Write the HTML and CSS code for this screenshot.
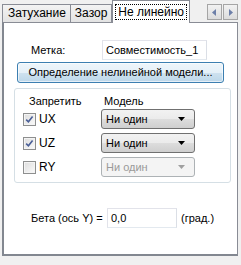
FILE: index.html
```html
<!DOCTYPE html>
<html>
<head>
<meta charset="utf-8">
<link rel="stylesheet" href="styles.css">
</head>
<body>
<div class="tabstrip">
  <div class="tab first">Затухание</div>
  <div class="tab">Зазор</div>
  <div class="tab active"><span class="focus">Не линейно</span></div>
  <div class="scroll">
    <div class="sbtn"><svg width="5" height="7" viewBox="0 0 5 7"><path d="M4 0 L0 3.5 L4 7Z" fill="#6d7fa8"/></svg></div>
    <div class="sbtn"><svg width="5" height="7" viewBox="0 0 5 7"><path d="M1 0 L5 3.5 L1 7Z" fill="#6d7fa8"/></svg></div>
  </div>
</div>
<div class="panel">
  <div class="row-label">
    <span class="lbl">Метка:</span>
    <div class="edit">Совместимость_1</div>
  </div>
  <div class="button">Определение нелинейной модели...</div>
  <div class="group">
    <div class="ghead"><span class="gh1">Запретить</span><span class="gh2">Модель</span></div>
    <div class="grow">
      <div class="chk"><span class="box"><svg width="11" height="11" viewBox="0 0 11 11"><path d="M2.2 5.6 L4.4 7.8 L8.6 2.4" fill="none" stroke="#4a5f97" stroke-width="1.6"/></svg></span><span>UX</span></div>
      <div class="combo"><span>Ни один</span><svg width="7" height="4" viewBox="0 0 7 4"><path d="M0 0 H7 L3.5 4Z" fill="#000"/></svg></div>
    </div>
    <div class="grow">
      <div class="chk"><span class="box"><svg width="11" height="11" viewBox="0 0 11 11"><path d="M2.2 5.6 L4.4 7.8 L8.6 2.4" fill="none" stroke="#4a5f97" stroke-width="1.6"/></svg></span><span>UZ</span></div>
      <div class="combo"><span>Ни один</span><svg width="7" height="4" viewBox="0 0 7 4"><path d="M0 0 H7 L3.5 4Z" fill="#000"/></svg></div>
    </div>
    <div class="grow">
      <div class="chk"><span class="box"></span><span>RY</span></div>
      <div class="combo disabled"><span>Ни один</span><svg width="7" height="4" viewBox="0 0 7 4"><path d="M0 0 H7 L3.5 4Z" fill="#a0a0a0"/></svg></div>
    </div>
  </div>
  <div class="row-beta">
    <span class="blbl">Бета (ось Y) =</span>
    <div class="edit beta">0,0</div>
    <span class="unit">(град.)</span>
  </div>
</div>
</body>
</html>
```
FILE: styles.css
```css
html, body {
  margin: 0;
  padding: 0;
  background: #f0f0f0;
  font-family: "Liberation Sans", Arial, sans-serif;
  font-size: 11px;
  color: #000;
  width: 241px;
  height: 265px;
  overflow: hidden;
  white-space: nowrap;
}
.tabstrip {
  display: flex;
  align-items: flex-end;
  height: 22px;
  padding-left: 2px;
  position: relative;
  z-index: 2;
}
.tab {
  height: 18px;
  box-sizing: border-box;
  border: 1px solid #898c95;
  border-bottom: none;
  background: linear-gradient(#f3f3f3, #e3e3e3);
  padding: 0 4px;
  line-height: 17px;
  font-size: 12px;
  margin-left: -1px;
}
.tab.first { margin-left: 0; padding: 0 4px 0 5px; }
.tab.active {
  height: 23px;
  background: #fff;
  margin-bottom: -1px;
  padding: 3px 2px 0 2px;
  line-height: 15px;
  margin-left: 0;
}
.focus {
  display: inline-block;
  border: 1px dotted #000;
  padding: 0 2px;
  line-height: 14px;
}
.scroll {
  display: flex;
  margin-left: auto;
  margin-right: 3px;
  align-self: flex-start;
  margin-top: 4px;
}
.sbtn {
  width: 13px;
  height: 14px;
  border: 1px solid #a5a5a5;
  background: linear-gradient(#f2f2f2, #dcdcdc);
  display: flex;
  align-items: center;
  justify-content: center;
  margin-left: 1px;
}
.panel {
  margin-left: 2px;
  width: 236px;
  height: 234px;
  box-sizing: border-box;
  border: 1px solid #898c95;
  border-left: 2px solid #828790;
  border-bottom: 2px solid #828790;
  background: #fff;
  padding-top: 17px;
}
.row-label {
  display: flex;
  align-items: center;
}
.lbl {
  width: 71px;
  padding-left: 27px;
}
.edit {
  box-sizing: border-box;
  height: 20px;
  border: 1px solid #abadb3;
  border-top-color: #e2e3ea;
  border-left-color: #e2e3ea;
  border-right-color: #dbdfe6;
  border-bottom-color: #e3e9ef;
  padding: 0 3px;
  line-height: 18px;
  width: 105px;
}
.button {
  margin: 2px 0 0 13px;
  width: 207px;
  height: 21px;
  box-sizing: border-box;
  border: 1px solid #3c7fb1;
  border-radius: 3px;
  background: linear-gradient(#eef6fb 0%, #e5f0f8 50%, #cfe2ef 51%, #bcd7ea 100%);
  box-shadow: inset 0 0 0 1px rgba(255,255,255,0.6);
  text-align: center;
  line-height: 19px;
}
.group {
  margin: 5px 0 0 10px;
  width: 217px;
  height: 95px;
  box-sizing: border-box;
  border: 1px solid #d5dfe5;
  border-radius: 3px;
  padding-top: 5px;
}
.ghead {
  display: flex;
  height: 15px;
  line-height: 15px;
}
.gh1 { padding-left: 14px; width: 75px; }
.grow {
  display: flex;
  align-items: center;
  height: 20px;
  margin-bottom: 4px;
}
.chk {
  display: flex;
  align-items: center;
  width: 78px;
  padding-left: 8px;
  font-size: 12px;
}
.box {
  width: 13px;
  height: 13px;
  box-sizing: border-box;
  border: 1px solid #8e8f8f;
  background: linear-gradient(135deg, #dcdcdc, #fbfbfb);
  box-shadow: inset 0 0 0 1px #f4f4f4;
  margin-right: 3px;
  display: flex;
  align-items: center;
  justify-content: center;
}
.combo {
  width: 94px;
  height: 20px;
  box-sizing: border-box;
  border: 1px solid #707070;
  border-radius: 3px;
  background: linear-gradient(#f2f2f2 0%, #ebebeb 50%, #dddddd 51%, #cfcfcf 100%);
  display: flex;
  align-items: center;
  justify-content: space-between;
  padding: 0 9px 0 4px;
}
.combo.disabled {
  border-color: #adb2b5;
  background: #f4f4f4;
  color: #9a9a9a;
}
.row-beta {
  display: flex;
  align-items: center;
  margin-top: 25px;
}
.blbl { padding-left: 27px; width: 76px; }
.edit.beta { width: 70px; }
.unit { margin-left: 4px; }
```
